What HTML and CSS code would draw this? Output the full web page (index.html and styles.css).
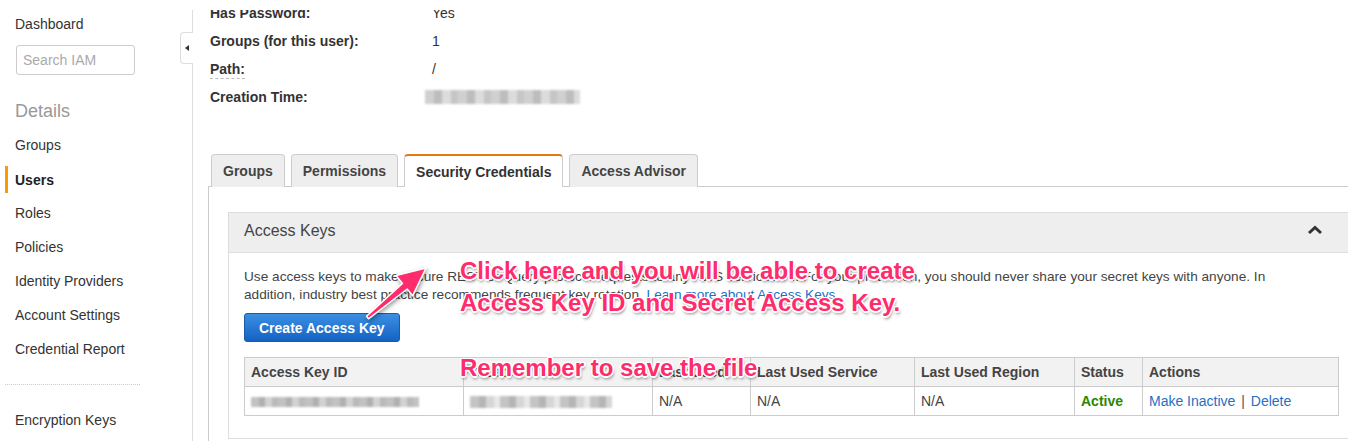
FILE: index.html
```html
<!DOCTYPE html>
<html>
<head>
<meta charset="utf-8">
<title>IAM User</title>
<link rel="stylesheet" href="styles.css">
</head>
<body>
<div class="page">
  <div class="topbar"></div>
  <div class="layout">
    <aside class="sidebar">
      <div class="nav-link dash">Dashboard</div>
      <div class="search"><span class="ph">Search IAM</span></div>
      <div class="section">Details</div>
      <ul class="nav">
        <li class="item">Groups</li>
        <li class="item active">Users</li>
        <li class="item">Roles</li>
        <li class="item">Policies</li>
        <li class="item">Identity Providers</li>
        <li class="item">Account Settings</li>
        <li class="item">Credential Report</li>
      </ul>
      <div class="sep"></div>
      <div class="item enc">Encryption Keys</div>
      <div class="toggle"><span class="tri"></span></div>
    </aside>
    <main class="main">
      <div class="details">
        <div class="row"><span class="lbl">Has Password:</span><span class="val">Yes</span></div>
        <div class="row"><span class="lbl">Groups (for this user):</span><span class="val">1</span></div>
        <div class="row"><span class="lbl"><span class="abbr">Path:</span></span><span class="val">/</span></div>
        <div class="row"><span class="lbl">Creation Time:</span><span class="val"><span class="blur blur-time"></span></span></div>
      </div>
      <div class="tabs">
        <div class="tab">Groups</div>
        <div class="tab">Permissions</div>
        <div class="tab on">Security Credentials</div>
        <div class="tab">Access Advisor</div>
      </div>
      <div class="panel">
        <div class="box">
          <div class="box-head">
            <span class="box-title">Access Keys</span>
            <svg class="chev" width="16" height="10" viewBox="0 0 16 10"><path d="M2 8 L8 2.5 L14 8" fill="none" stroke="#333" stroke-width="3"/></svg>
          </div>
          <div class="box-body">
            <p class="desc">Use access keys to make secure REST or Query protocol requests to any AWS service API. For your protection, you should never share your secret keys with anyone. In addition, industry best practice recommends frequent key rotation. <a class="link">Learn more about Access Keys</a></p>
            <button class="btn">Create Access Key</button>
            <table class="keys">
              <colgroup>
                <col class="c1"><col class="c2"><col class="c3"><col class="c4"><col class="c5"><col class="c6"><col class="c7">
              </colgroup>
              <thead>
                <tr><th>Access Key ID</th><th>Created</th><th>Last Used</th><th>Last Used Service</th><th>Last Used Region</th><th>Status</th><th>Actions</th></tr>
              </thead>
              <tbody>
                <tr>
                  <td><span class="blur blur-id"></span></td>
                  <td><span class="blur blur-created"></span></td>
                  <td>N/A</td>
                  <td>N/A</td>
                  <td>N/A</td>
                  <td class="active">Active</td>
                  <td><a class="link">Make Inactive</a> <span class="bar">|</span> <a class="link">Delete</a></td>
                </tr>
              </tbody>
            </table>
          </div>
        </div>
      </div>
    </main>
  </div>
  <div class="note note1">Click here and you will be able to create<br>Access Key ID and Secret Access Key.</div>
  <div class="note note2">Remember to save the file</div>
  <svg class="arrow" width="1348" height="441" viewBox="0 0 1348 441">
    <polygon points="366.5,316.2 402.5,283.4 396.0,275.5 426,268 412.6,295.9 407.2,289.0 368.5,318.8" fill="#fe2c6c" stroke="#fff" stroke-width="1.5" stroke-linejoin="round"/>
  </svg>
</div>
</body>
</html>
```
FILE: styles.css
```css
* { box-sizing: border-box; }
html, body { margin: 0; padding: 0; }
body {
  width: 1348px;
  height: 441px;
  overflow: hidden;
  background: #fff;
  font-family: "Liberation Sans", Arial, sans-serif;
  font-size: 14px;
  color: #444;
}
.page { position: relative; width: 1348px; height: 441px; }
.topbar { height: 10px; background: #fff; }
.layout { display: flex; height: 431px; }

.sidebar {
  position: relative;
  width: 193px;
  flex: none;
  border-right: 1px solid #ddd;
  padding-top: 4px;
}
.dash { padding-left: 15px; line-height: 20px; color: #333; }
.search {
  margin: 11px 0 0 16px;
  width: 119px;
  height: 30px;
  border: 1px solid #ccc;
  border-radius: 3px;
  display: flex;
  align-items: center;
  padding-left: 6px;
}
.ph { color: #aaa; font-size: 14px; }
.section {
  margin-top: 24px;
  padding-left: 15px;
  font-size: 18px;
  line-height: 24px;
  color: #999;
}
.nav { list-style: none; margin: 5px 0 0; padding: 0; }
.item {
  height: 34px;
  line-height: 34px;
  padding-left: 15px;
  color: #333;
  position: relative;
}
.nav .item:nth-child(n+2) { line-height: 36px; }
.nav .item:nth-child(n+3) { line-height: 34px; }
.item.active { font-weight: bold; color: #222; }
.item.active::before {
  content: "";
  position: absolute;
  left: 5px;
  top: 4px;
  width: 3px;
  height: 27px;
  background: #f90;
}
.sep {
  margin: 18px 0 0 5px;
  width: 135px;
  border-top: 1px dotted #ccc;
}
.enc { margin-top: 18px; }
.toggle {
  position: absolute;
  right: -1px;
  top: 22px;
  width: 13px;
  height: 32px;
  border: 1px solid #ddd;
  border-right: none;
  border-radius: 4px 0 0 4px;
  background: #fff;
  display: flex;
  align-items: center;
  justify-content: center;
}
.tri {
  width: 0; height: 0;
  border-top: 3.5px solid transparent;
  border-bottom: 3.5px solid transparent;
  border-right: 4px solid #333;
}

.main {
  flex: 1;
  min-width: 0;
  overflow: hidden;
  padding-left: 15px;
}
.details { margin-top: -11px; padding-left: 2px; }
.row { display: flex; height: 28px; align-items: center; }
.lbl { width: 222px; font-weight: bold; color: #333; }
.abbr { border-bottom: 1px dashed #bbb; padding-bottom: 1px; }
.val { color: #333; }
.blur { display: inline-block; filter: blur(1.2px); }
.blur-time {
  width: 155px; height: 14px; margin: 2px 0 0 -7px;
  background: repeating-linear-gradient(90deg, #d0d0d0 0 9px, #bdbdbd 9px 17px, #dcdcdc 17px 26px, #c6c6c6 26px 33px);
}

.tabs {
  display: flex;
  gap: 6px;
  margin-top: 43px;
  padding-left: 3px;
  position: relative;
  z-index: 2;
}
.tab {
  height: 33px;
  padding: 0 11px;
  border: 1px solid #ccc;
  border-bottom: none;
  border-radius: 4px 4px 0 0;
  background: #eee;
  font-weight: bold;
  color: #444;
  display: flex;
  align-items: center;
  margin-bottom: -1px;
}
.tab.on {
  background: #fff;
  border-top: 2px solid #e47911;
  color: #333;
  padding-top: 1px;
}
.panel {
  width: 1168px;
  border-top: 1px solid #ccc;
  border-left: 1px solid #ccc;
  padding: 25px 20px 0 19px;
  height: 260px;
}
.box {
  width: 1126px;
  border: 1px solid #ddd;
}
.box-head {
  height: 40px;
  background: #eee;
  border-bottom: 1px solid #ddd;
  display: flex;
  align-items: center;
  justify-content: space-between;
  padding: 0 30px 3px 15px;
}
.box-title { font-size: 16px; color: #444; }
.chev { display: block; margin-top: -2px; }
.box-body { padding: 15px 15px 22px; }
.desc {
  margin: 0;
  line-height: 18px;
  font-size: 13.65px;
  max-width: 1040px;
  color: #444;
}
.link { color: #1f6fc5; text-decoration: none; }
.btn {
  display: block;
  margin-top: 9px;
  height: 29px;
  padding: 0 14px;
  border: 1px solid #1a5aa8;
  border-radius: 3px;
  background: linear-gradient(#3b8fe2, #1462c3);
  color: #fff;
  font-family: "Liberation Sans", Arial, sans-serif;
  font-size: 14px;
  font-weight: bold;
}
.keys {
  margin-top: 15px;
  border-collapse: collapse;
  table-layout: fixed;
  width: 1094px;
}
.c1 { width: 219px; } .c2 { width: 189px; } .c3 { width: 98px; } .c4 { width: 164px; }
.c5 { width: 160px; } .c6 { width: 68px; } .c7 { width: 196px; }
.keys th, .keys td {
  border: 1px solid #ccc;
  height: 29px;
  padding: 0 6px;
  text-align: left;
  white-space: nowrap;
  overflow: hidden;
}
.keys th { background: #f2f2f2; font-weight: bold; color: #444; }
.keys td { color: #444; }
.keys td.active { color: #2a8703; font-weight: bold; }
.bar { color: #555; margin: 0 2px; }
.blur-id {
  width: 168px; height: 10px; margin-top: 4px;
  background: repeating-linear-gradient(90deg, #c2c2c2 0 8px, #b0b0b0 8px 14px, #d2d2d2 14px 21px, #bababa 21px 27px);
}
.blur-created {
  width: 142px; height: 12px; margin-top: 4px;
  background: repeating-linear-gradient(90deg, #c4c4c4 0 9px, #b5b5b5 9px 16px, #d6d6d6 16px 24px, #e8e8e8 24px 30px);
}

.note {
  position: absolute;
  left: 460px;
  font-weight: bold;
  font-size: 24px;
  line-height: 32px;
  color: #fe2c6c;
  white-space: nowrap;
  text-shadow:
    1.5px 0 0 #fff, -1.5px 0 0 #fff, 0 1.5px 0 #fff, 0 -1.5px 0 #fff,
    1px 1px 0 #fff, -1px -1px 0 #fff, 1px -1px 0 #fff, -1px 1px 0 #fff,
    1px 3px 3px rgba(0,0,0,0.45);
}
.note1 { top: 255px; }
.note2 { top: 352px; }
.arrow {
  position: absolute;
  left: 0; top: 0;
  pointer-events: none;
  filter: drop-shadow(1px 2px 2px rgba(0,0,0,0.4));
}
```
